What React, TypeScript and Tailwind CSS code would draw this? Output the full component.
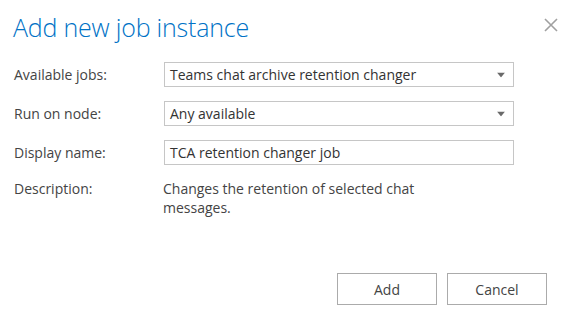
import React from 'react';

const Caret = () => (
  <svg width="8" height="5" viewBox="0 0 8 5" className="absolute right-[8px] top-1/2 -translate-y-1/2">
    <path d="M0 0 H8 L4 5 Z" fill="#6a6a6a" />
  </svg>
);

const Field = ({ label, children }: { label: string; children: React.ReactNode }) => (
  <div className="flex items-center">
    <label className="w-[150px] shrink-0 text-[14px] text-[#444]">{label}</label>
    {children}
  </div>
);

const SelectBox = ({ value }: { value: string }) => (
  <div className="relative w-[350px] h-[25px] border border-[#c6c6c6] bg-white flex items-center pl-[5px] text-[14px] text-[#333]">
    {value}
    <Caret />
  </div>
);

export default function App() {
  return (
    <div
      className="w-[570px] h-[311px] bg-white flex flex-col"
      style={{ fontFamily: '"Open Sans", "Noto Sans", sans-serif' }}
    >
      <div className="flex items-start justify-between pl-[13px] pr-[11px] pt-[11px]">
        <h1 className="text-[25px] font-light text-[#0072c6] leading-[32px] tracking-[-0.2px]">Add new job instance</h1>
        <button className="mt-[6px] w-[16px] h-[16px] flex items-center justify-center">
          <svg width="14" height="14" viewBox="0 0 14 14">
            <path d="M1 1 L13 13 M13 1 L1 13" stroke="#a0a0a0" strokeWidth="1.6" />
          </svg>
        </button>
      </div>

      <div className="flex flex-col gap-[14px] pl-[14px] mt-[19px]">
        <Field label="Available jobs:">
          <SelectBox value="Teams chat archive retention changer" />
        </Field>
        <Field label="Run on node:">
          <SelectBox value="Any available" />
        </Field>
        <Field label="Display name:">
          <div className="w-[350px] h-[25px] border border-[#c6c6c6] bg-white flex items-center pl-[5px] text-[14px] text-[#333]">
            TCA retention changer job
          </div>
        </Field>
        <div className="flex items-start">
          <span className="w-[149px] shrink-0 text-[14px] text-[#444] leading-[19px]">Description:</span>
          <p className="w-[350px] text-[14px] text-[#444] leading-[19px]">
            Changes the retention of selected chat<br />messages.
          </p>
        </div>
      </div>

      <div className="mt-auto mb-[6px] flex justify-end gap-[10px] pr-[23px]">
        <button className="w-[100px] h-[32px] border border-[#ababab] bg-white text-[14px] text-[#444]">Add</button>
        <button className="w-[100px] h-[32px] border border-[#ababab] bg-white text-[14px] text-[#444]">Cancel</button>
      </div>
    </div>
  );
}
